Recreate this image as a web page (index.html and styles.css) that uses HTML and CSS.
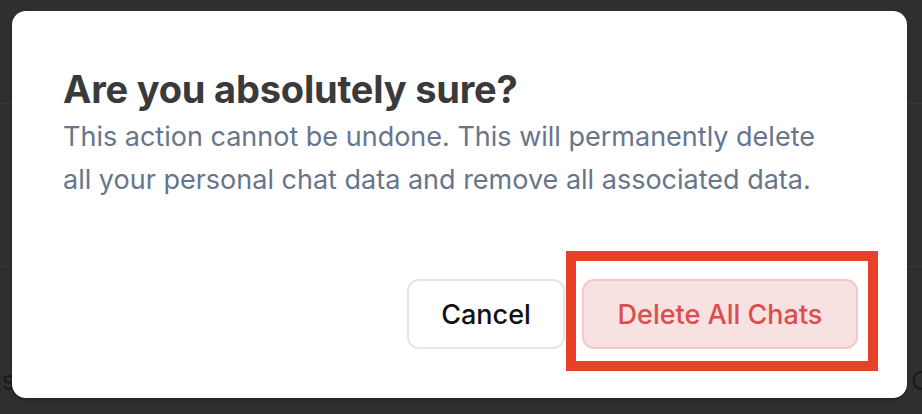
FILE: index.html
```html
<!DOCTYPE html>
<html lang="en">
<head>
    <meta charset="UTF-8">
    <meta name="viewport" content="width=device-width, initial-scale=1.0">
    <title>Delete chats</title>
    <link rel="stylesheet" href="styles.css">
</head>
<body>
    <div class="page">
        <div class="page-row row-top"><span class="left-word">Profile</span></div>
        <div class="page-row row-mid"></div>
        <div class="page-row row-bottom">
            <span class="left-word">Settings</span>
            <span class="right-word">Chats</span>
        </div>
    </div>

    <div class="overlay">
        <div class="dialog">
            <div class="dialog-header">
                <h2 class="dialog-title">Are you absolutely sure?</h2>
                <p class="dialog-desc">This action cannot be undone. This will permanently delete all your personal chat data and remove all associated data.</p>
            </div>
            <div class="dialog-footer">
                <button class="btn btn-cancel">Cancel</button>
                <div class="highlight">
                    <button class="btn btn-danger">Delete All Chats</button>
                </div>
            </div>
        </div>
    </div>
</body>
</html>
```

FILE: styles.css
```css
* {
    box-sizing: border-box;
}

body {
    margin: 0;
    width: 922px;
    height: 414px;
    overflow: hidden;
    background: #2f2f2f;
    font-family: Inter, "Noto Sans", sans-serif;
    position: relative;
}

/* page behind the dialog */
.page {
    display: flex;
    flex-direction: column;
    height: 100%;
}

.page-row {
    display: flex;
    justify-content: space-between;
    align-items: center;
    color: #1b1b1b;
    font-size: 26px;
}

.row-top {
    height: 104px;
    border-bottom: 1px solid #3a3a3a;
    align-items: flex-start;
    padding-top: 28px;
}

.row-mid {
    height: 163px;
    border-bottom: 1px solid #3a3a3a;
}

.row-bottom {
    flex: 1;
    align-items: flex-start;
    padding-top: 98px;
}

.left-word {
    margin-left: -80px;
}

.row-bottom .left-word {
    margin-left: -84px;
}

.right-word {
    margin-right: -60px;
}

/* dialog */
.overlay {
    position: absolute;
    inset: 0;
    padding: 11px 15px 16px 12px;
}

.dialog {
    height: 100%;
    background: #fff;
    border-radius: 14px;
    box-shadow: 0 2px 3px rgba(0, 0, 0, 0.25);
    padding: 56px 49px 49px 51px;
    display: flex;
    flex-direction: column;
    justify-content: space-between;
}

.dialog-title {
    margin: 0;
    font-size: 38px;
    font-weight: 700;
    color: #3a3a3a;
    line-height: 44px;
    letter-spacing: -0.2px;
}

.dialog-desc {
    margin: 4px 0 0;
    font-size: 27px;
    line-height: 43px;
    color: #67758c;
    max-width: 765px;
}

.dialog-footer {
    display: flex;
    justify-content: flex-end;
    align-items: center;
    gap: 17px;
}

.btn {
    height: 70px;
    border-radius: 12px;
    font-family: inherit;
    font-size: 27px;
    font-weight: 500;
    padding: 0;
    cursor: pointer;
}

.btn-cancel {
    background: #fff;
    color: #111;
    border: 2px solid #e6e6e6;
    width: 158px;
}

.btn-danger {
    background: #f8e1e1;
    color: #dc4e4e;
    border: 2px solid #f3c8c8;
    width: 276px;
}

/* annotation box around the danger button */
.highlight {
    position: relative;
}

.highlight::after {
    content: "";
    position: absolute;
    left: -16px;
    top: -28px;
    right: -20px;
    bottom: -22px;
    border: 10px solid #e8412a;
    pointer-events: none;
}
```
